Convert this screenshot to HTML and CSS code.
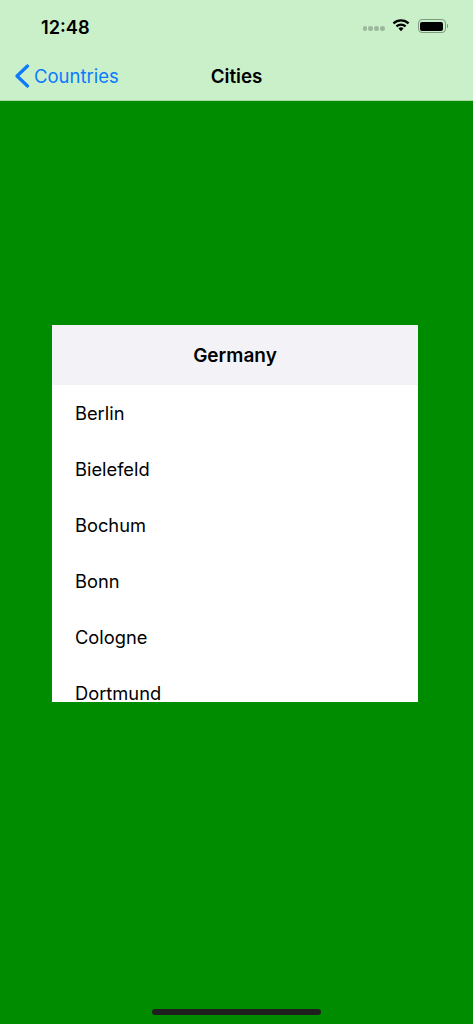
FILE: index.html
```
<!DOCTYPE html>
<html lang="en">
<head>
<meta charset="utf-8">
<title>Cities</title>
<link rel="stylesheet" href="styles.css">
</head>
<body>
<div class="screen">
  <header class="topbar">
    <div class="status">
      <span class="time">12:48</span>
      <div class="status-icons">
        <div class="dots"><i></i><i></i><i></i><i></i></div>
        <svg class="wifi" width="18" height="14" viewBox="0 0 18 14"><path d="M0.6 4.6A12 12 0 0 1 17.4 4.6L15.8 6.3A9.7 9.7 0 0 0 2.2 6.3Z"/><path d="M3.6 7.6A7.8 7.8 0 0 1 14.4 7.6L12.8 9.3A5.5 5.5 0 0 0 5.2 9.3Z"/><path d="M6.5 10.5A3.6 3.6 0 0 1 11.5 10.5L9 13.2Z"/></svg>
        <div class="battery"><div class="battery-body"><div class="battery-fill"></div></div><div class="battery-cap"></div></div>
      </div>
    </div>
    <nav class="navbar">
      <a class="back">
        <svg width="16" height="24" viewBox="0 0 16 24"><path d="M13.5 2L3 12L13.5 22" fill="none" stroke="#0a7aff" stroke-width="3.2" stroke-linecap="round" stroke-linejoin="round"/></svg>
        <span>Countries</span>
      </a>
      <h1 class="title">Cities</h1>
    </nav>
  </header>
  <main class="content">
    <section class="card">
      <h2 class="card-head">Germany</h2>
      <ul class="list">
        <li>Berlin</li>
        <li>Bielefeld</li>
        <li>Bochum</li>
        <li>Bonn</li>
        <li>Cologne</li>
        <li>Dortmund</li>
      </ul>
    </section>
    <div class="home-bar"></div>
  </main>
</div>
</body>
</html>
```
FILE: styles.css
```
* { box-sizing: border-box; }
html, body { margin: 0; padding: 0; }
body { font-family: Inter, "Liberation Sans", sans-serif; background: #008c00; color: #000; }
.screen { width: 473px; height: 1024px; display: flex; flex-direction: column; overflow: hidden; }
.topbar { height: 101px; background: #c9f0c9; border-bottom: 1px solid #a6d8a6; flex: none; }
.status { height: 52px; display: flex; justify-content: space-between; align-items: center; padding: 1px 25px 0 41px; }
.time { font-size: 18.2px; font-weight: 600; line-height: 52px; }
.status-icons { display: flex; align-items: center; margin-top: -1px; }
.dots { display: flex; gap: 1.2px; margin-right: 7px; margin-top: 5px; }
.dots i { width: 4.6px; height: 4.6px; border-radius: 50%; background: #9cb89c; display: block; }
.wifi { fill: #000; margin-right: 8px; margin-top: -2px; }
.battery { display: flex; align-items: center; }
.battery-body { width: 28px; height: 14px; border: 1px solid #7f9a7f; border-radius: 4px; padding: 1.5px; }
.battery-fill { width: 100%; height: 100%; background: #000; border-radius: 2px; }
.battery-cap { width: 1.5px; height: 4px; background: #7f9a7f; margin-left: 1px; border-radius: 0 1px 1px 0; }
.navbar { height: 48px; position: relative; display: flex; align-items: center; justify-content: center; }
.back { position: absolute; left: 14px; top: 0; height: 47px; display: flex; align-items: center; gap: 4px; color: #0a7aff; font-size: 18.5px; }
.title { margin: 0; font-size: 18.8px; font-weight: 600; }
.content { flex: 1; display: flex; flex-direction: column; align-items: center; padding-top: 223.5px; position: relative; }
.card { width: 366px; height: 377px; margin-left: -3px; background: #fff; overflow: hidden; flex: none; }
.card-head { margin: 0; height: 60.5px; padding-top: 1px; background: #f2f2f7; display: flex; align-items: center; justify-content: center; font-size: 19px; font-weight: 600; }
.list { margin: 0; padding: 0; list-style: none; }
.list li { height: 56px; padding-left: 23px; display: flex; align-items: center; font-size: 18.3px; }
.list li:first-child { margin-top: -0.5px; }
.home-bar { position: absolute; left: 152px; bottom: 9px; width: 169px; height: 6px; border-radius: 3px; background: #1f1f1f; }
```
